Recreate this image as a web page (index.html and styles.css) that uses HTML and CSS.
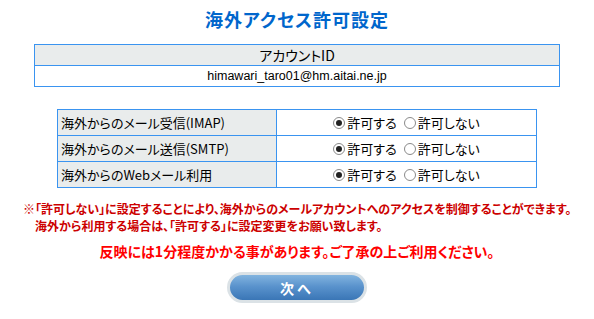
FILE: index.html
```html
<!DOCTYPE html>
<html lang="ja">
  <head>
    <meta charset="UTF-8" />
    <meta name="viewport" content="width=device-width, initial-scale=1.0" />
    <title>海外アクセス許可設定</title>
    <link rel="stylesheet" href="styles.css">
  </head>
  <body>
    <div class="page">
      <h1 class="title">海外アクセス許可設定</h1>
      <table class="account">
        <tr><th>アカウントID</th></tr>
        <tr><td>himawari_taro01@hm.aitai.ne.jp</td></tr>
      </table>
      <table class="settings">
        <tr>
          <th>海外からのメール受信(IMAP)</th>
          <td>
            <div class="choices">
              <label><input type="radio" name="imap" checked />許可する</label>
              <label><input type="radio" name="imap" />許可しない</label>
            </div>
          </td>
        </tr>
        <tr>
          <th>海外からのメール送信(SMTP)</th>
          <td>
            <div class="choices">
              <label><input type="radio" name="smtp" checked />許可する</label>
              <label><input type="radio" name="smtp" />許可しない</label>
            </div>
          </td>
        </tr>
        <tr>
          <th>海外からのWebメール利用</th>
          <td>
            <div class="choices">
              <label><input type="radio" name="web" checked />許可する</label>
              <label><input type="radio" name="web" />許可しない</label>
            </div>
          </td>
        </tr>
      </table>
      <div class="note">
        <p>※「許可しない」に設定することにより、海外からのメールアカウントへのアクセスを制御することができます。</p>
        <p class="indent">海外から利用する場合は、「許可する」に設定変更をお願い致します。</p>
      </div>
      <p class="notice">反映には1分程度かかる事があります。ご了承の上ご利用ください。</p>
      <div class="actions">
        <button class="next" type="button">次へ</button>
      </div>
    </div>
  </body>
</html>
```

FILE: styles.css
```css
body {
  font-family: "Noto Sans CJK JP", "Liberation Sans", sans-serif;
  font-feature-settings: "palt";
  background: #fff;
  color: #000;
  margin: 0;
}
.page {
  width: 594px;
  padding-top: 7px;
}
.title {
  margin: 0;
  text-align: center;
  color: #0066cc;
  font-size: 18px;
  font-weight: bold;
  line-height: 24px;
  letter-spacing: 1px;
}
table {
  border-collapse: collapse;
  margin: 0 auto;
}
th,
td {
  border: 1px solid #3a94f0;
  padding: 0;
}
.account {
  width: 526px;
  margin-top: 13px;
}
.account th {
  background: #e9ecec;
  font-weight: normal;
  font-size: 14px;
  height: 20px;
  line-height: 20px;
}
.account td {
  text-align: center;
  font-family: "Liberation Sans", "Noto Sans CJK JP", sans-serif;
  font-size: 12.5px;
  height: 20px;
  line-height: 20px;
}
.settings {
  width: 480px;
  margin-top: 22px;
}
.settings th {
  width: 215px;
  background: #e9ecec;
  font-weight: normal;
  text-align: left;
  font-size: 13px;
  padding-left: 3px;
  height: 25px;
  line-height: 25px;
}
.settings td {
  font-size: 13px;
  height: 25px;
}
.choices {
  display: flex;
  justify-content: center;
  align-items: center;
  gap: 7px;
  height: 25px;
}
.choices label {
  display: flex;
  align-items: center;
  gap: 2px;
}
.choices input {
  appearance: none;
  width: 12px;
  height: 12px;
  margin: 0;
  border: 1px solid #8a8a8a;
  border-radius: 50%;
  background: #fff;
  display: flex;
  align-items: center;
  justify-content: center;
}
.choices input:checked::after {
  content: "";
  width: 6px;
  height: 6px;
  border-radius: 50%;
  background: #222;
}
.note {
  margin: 12px 0 0 23px;
  color: #cc0000;
  font-size: 12px;
  font-weight: bold;
  white-space: nowrap;
}
.note p {
  margin: 0;
  line-height: 17px;
}
.note .indent {
  padding-left: 12px;
}
.notice {
  margin: 7px 0 0;
  text-align: center;
  color: #ff0000;
  font-size: 14px;
  font-weight: bold;
  line-height: 20px;
}
.actions {
  display: flex;
  justify-content: center;
  margin-top: 11px;
}
.next {
  width: 140px;
  height: 31px;
  border: 3px solid #dbe2e6;
  border-radius: 16px;
  background: linear-gradient(#82b4df 0%, #5a93cd 45%, #3a76b6 100%);
  color: #fff;
  font-family: inherit;
  font-size: 14px;
  font-weight: bold;
  letter-spacing: 3px;
  cursor: pointer;
  padding: 0;
}
```
